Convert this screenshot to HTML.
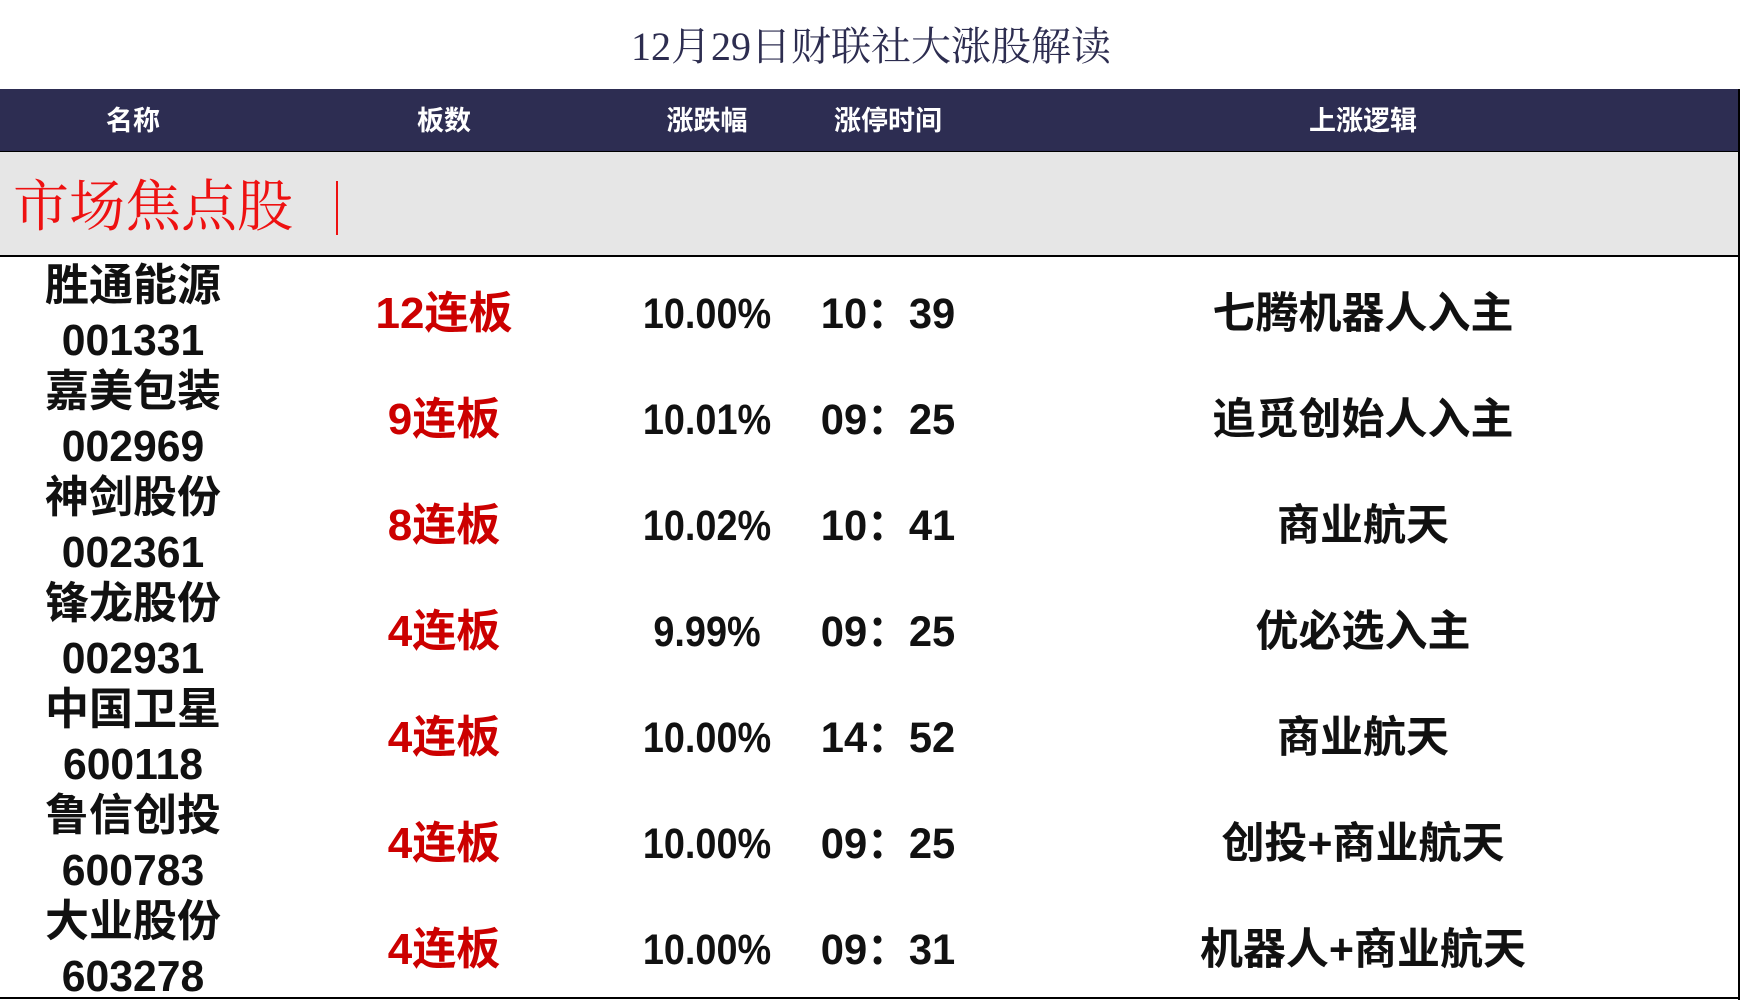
<!DOCTYPE html>
<html><head><meta charset="utf-8"><style>
body{margin:0;width:1740px;height:1000px;background:#fff;position:relative;overflow:hidden;font-family:"Liberation Sans","Noto Sans CJK SC",sans-serif}
.a{position:absolute;white-space:nowrap;transform:translate(-50%,-50%);line-height:50px;height:50px}
.title{left:871px;top:47px;font-family:"Liberation Serif","Noto Serif CJK SC",serif;font-size:40px;color:#2d2d50}
.hdr{position:absolute;left:0;top:89px;width:1740px;height:62px;background:#2d2d52;border-bottom:2px solid #000}
.h{color:#fff;font-size:27px;font-weight:bold;top:121px}
.band{position:absolute;left:0;top:152px;width:1739px;height:103px;background:#e6e6e6;border-bottom:2px solid #000}
.fs{position:absolute;left:13px;top:178px;font-family:"Liberation Serif","Noto Serif CJK SC",serif;font-size:56px;color:#ee1111;line-height:60px}
.bar{position:absolute;left:336px;top:181px;width:2px;height:54px;background:#ee1111}
.rb{position:absolute;left:1738px;top:89px;width:2px;height:911px;background:#000}
.bb{position:absolute;left:0;top:997px;width:1740px;height:2px;background:#000}
.n{font-size:44px;font-weight:bold;color:#111}
.c{font-size:44px;font-weight:bold;color:#111;transform:translate(-50%,-50%) scaleX(0.97)}
.v{font-size:43px;font-weight:bold;color:#111}
.p{font-size:43px;font-weight:bold;color:#111;transform:translate(-50%,-50%) scaleX(0.88)}
.t{font-size:43px;font-weight:bold;color:#111;transform:translate(-50%,-50%) scaleX(0.97)}
.r{font-size:44px;font-weight:bold;color:#cc0000}
</style></head><body>
<div class="a title">12月29日财联社大涨股解读</div>
<div class="hdr"></div>
<div class="a h" style="left:133px">名称</div>
<div class="a h" style="left:444px">板数</div>
<div class="a h" style="left:707px">涨跌幅</div>
<div class="a h" style="left:888px">涨停时间</div>
<div class="a h" style="left:1363px">上涨逻辑</div>
<div class="band"></div>
<div class="fs">市场焦点股</div>
<div class="bar"></div>
<div class="rb"></div><div class="bb"></div>

<div class="a n" style="left:133px;top:286px">胜通能源</div><div class="a c" style="left:133px;top:341px">001331</div>
<div class="a r" style="left:444px;top:314px">12连板</div><div class="a p" style="left:707px;top:314px">10.00%</div><div class="a t" style="left:888px;top:314px">10：39</div><div class="a v" style="left:1363px;top:314px">七腾机器人入主</div>

<div class="a n" style="left:133px;top:392px">嘉美包装</div><div class="a c" style="left:133px;top:447px">002969</div>
<div class="a r" style="left:444px;top:420px">9连板</div><div class="a p" style="left:707px;top:420px">10.01%</div><div class="a t" style="left:888px;top:420px">09：25</div><div class="a v" style="left:1363px;top:420px">追觅创始人入主</div>

<div class="a n" style="left:133px;top:498px">神剑股份</div><div class="a c" style="left:133px;top:553px">002361</div>
<div class="a r" style="left:444px;top:526px">8连板</div><div class="a p" style="left:707px;top:526px">10.02%</div><div class="a t" style="left:888px;top:526px">10：41</div><div class="a v" style="left:1363px;top:526px">商业航天</div>

<div class="a n" style="left:133px;top:604px">锋龙股份</div><div class="a c" style="left:133px;top:659px">002931</div>
<div class="a r" style="left:444px;top:632px">4连板</div><div class="a p" style="left:707px;top:632px">9.99%</div><div class="a t" style="left:888px;top:632px">09：25</div><div class="a v" style="left:1363px;top:632px">优必选入主</div>

<div class="a n" style="left:133px;top:710px">中国卫星</div><div class="a c" style="left:133px;top:765px">600118</div>
<div class="a r" style="left:444px;top:738px">4连板</div><div class="a p" style="left:707px;top:738px">10.00%</div><div class="a t" style="left:888px;top:738px">14：52</div><div class="a v" style="left:1363px;top:738px">商业航天</div>

<div class="a n" style="left:133px;top:816px">鲁信创投</div><div class="a c" style="left:133px;top:871px">600783</div>
<div class="a r" style="left:444px;top:844px">4连板</div><div class="a p" style="left:707px;top:844px">10.00%</div><div class="a t" style="left:888px;top:844px">09：25</div><div class="a v" style="left:1363px;top:844px">创投+商业航天</div>

<div class="a n" style="left:133px;top:922px">大业股份</div><div class="a c" style="left:133px;top:977px">603278</div>
<div class="a r" style="left:444px;top:950px">4连板</div><div class="a p" style="left:707px;top:950px">10.00%</div><div class="a t" style="left:888px;top:950px">09：31</div><div class="a v" style="left:1363px;top:950px">机器人+商业航天</div>
</body></html>
